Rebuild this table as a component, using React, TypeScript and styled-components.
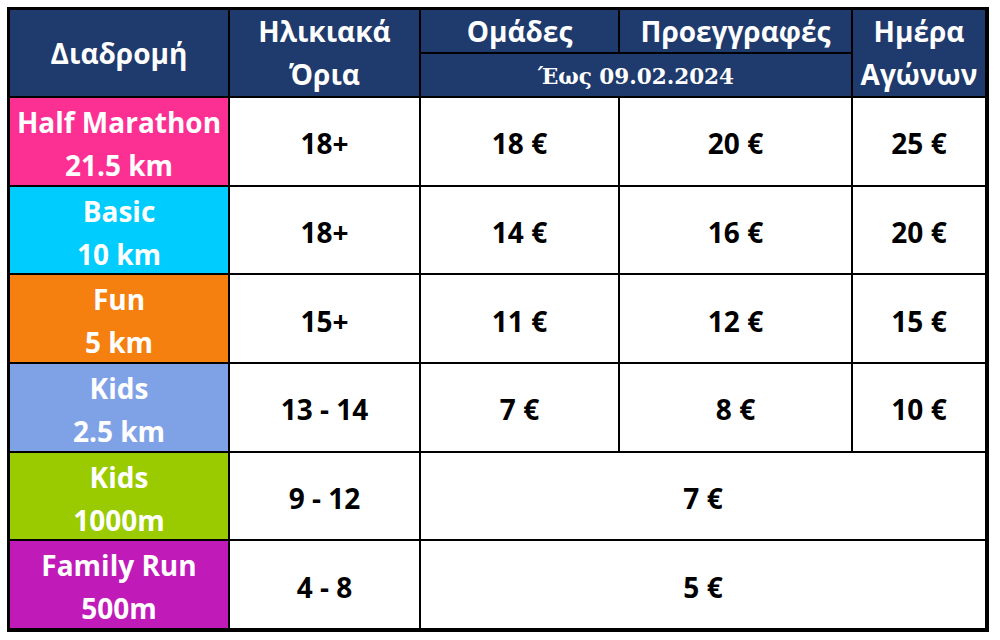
import React from 'react';
import styled, { createGlobalStyle } from 'styled-components';

const GlobalStyle = createGlobalStyle`
  html, body {
    margin: 0;
    padding: 0;
    background: #ffffff;
  }
  body {
    font-family: "Open Sans", "Noto Sans", sans-serif;
  }
`;

type Route = {
  name: string;
  distance: string;
  color: string;
  ages: string;
  prices: string[];
};

const routes: Route[] = [
  { name: 'Half Marathon', distance: '21.5 km', color: '#fc2f93', ages: '18+', prices: ['18 €', '20 €', '25 €'] },
  { name: 'Basic', distance: '10 km', color: '#00ccfe', ages: '18+', prices: ['14 €', '16 €', '20 €'] },
  { name: 'Fun', distance: '5 km', color: '#f5800f', ages: '15+', prices: ['11 €', '12 €', '15 €'] },
  { name: 'Kids', distance: '2.5 km', color: '#7fa2e7', ages: '13 - 14', prices: ['7 €', '8 €', '10 €'] },
  { name: 'Kids', distance: '1000m', color: '#99cb00', ages: '9 - 12', prices: ['7 €'] },
  { name: 'Family Run', distance: '500m', color: '#c01bb8', ages: '4 - 8', prices: ['5 €'] },
];

const Page = styled.div`
  padding: 7px 0 0 7px;
`;

const Grid = styled.div`
  width: 975px;
  height: 618px;
  display: grid;
  grid-template-columns: 218px 189px 197px 231px 132px;
  grid-template-rows: 42px 42px repeat(6, minmax(0, 1fr));
  gap: 2px;
  background: #000;
  border-style: solid;
  border-color: #000;
  border-width: 3px 4px 4px 3px;
`;

const Cell = styled.div<{ $bg?: string; $col?: string; $row?: string }>`
  display: flex;
  flex-direction: column;
  align-items: center;
  justify-content: center;
  text-align: center;
  background: ${(p) => p.$bg || '#ffffff'};
  grid-column: ${(p) => p.$col || 'auto'};
  grid-row: ${(p) => p.$row || 'auto'};
  font-weight: 700;
  font-size: 28px;
  line-height: 43px;
  color: #000;
  white-space: nowrap;
  overflow: hidden;
  padding-top: 5px;
`;

const HeadCell = styled(Cell)`
  background: #1f3a6d;
  color: #fff;
  padding-top: 0;
`;

const DateCell = styled(HeadCell)`
  font-family: "DejaVu Serif", "Liberation Serif", serif;
  font-size: 21.5px;
  font-weight: 700;
  padding-top: 2px;
`;

const RouteCell = styled(Cell)`
  color: #fff;
`;

export default function App() {
  return (
    <Page>
      <GlobalStyle />
      <Grid>
        <HeadCell $col="1" $row="1 / span 2">Διαδρομή</HeadCell>
        <HeadCell $col="2" $row="1 / span 2">
          <span>Ηλικιακά</span>
          <span>Όρια</span>
        </HeadCell>
        <HeadCell $col="3" $row="1">Ομάδες</HeadCell>
        <HeadCell $col="4" $row="1">Προεγγραφές</HeadCell>
        <HeadCell $col="5" $row="1 / span 2">
          <span>Ημέρα</span>
          <span>Αγώνων</span>
        </HeadCell>
        <DateCell $col="3 / span 2" $row="2">Έως 09.02.2024</DateCell>

        {routes.map((r, i) => (
          <React.Fragment key={i}>
            <RouteCell $bg={r.color}>
              <span>{r.name}</span>
              <span>{r.distance}</span>
            </RouteCell>
            <Cell>{r.ages}</Cell>
            {r.prices.length === 1 ? (
              <Cell $col="3 / span 3">{r.prices[0]}</Cell>
            ) : (
              r.prices.map((p, j) => <Cell key={j}>{p}</Cell>)
            )}
          </React.Fragment>
        ))}
      </Grid>
    </Page>
  );
}
